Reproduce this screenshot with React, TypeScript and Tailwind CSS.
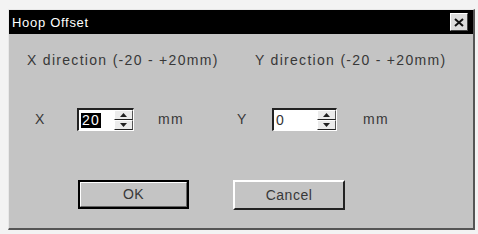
import React from "react";

const font = { fontFamily: '"Liberation Sans", Arial, sans-serif' };

function Spinner() {
  return (
    <div className="flex flex-col w-[19px] h-full">
      <div className="flex-1 flex items-center justify-center bg-[#ececec] border-t border-l border-white border-b border-b-[#222] border-r border-r-[#555]">
        <svg width="7" height="4" viewBox="0 0 7 4"><path d="M3.5 0 L7 4 L0 4 Z" fill="#222" /></svg>
      </div>
      <div className="flex-1 flex items-center justify-center bg-[#ececec] border-t border-l border-white border-b border-b-[#222] border-r border-r-[#555]">
        <svg width="7" height="4" viewBox="0 0 7 4"><path d="M0 0 L7 0 L3.5 4 Z" fill="#222" /></svg>
      </div>
    </div>
  );
}

function NumInput({ value, selected, width }: { value: string; selected?: boolean; width: string }) {
  return (
    <div className={`${width} h-[23px] flex border-t-2 border-l-2 border-t-[#222] border-l-[#222] border-b border-r border-b-white border-r-white bg-white`}>
      <div className="flex-1 flex items-center pl-[2px]">
        <span className={selected ? "bg-black text-white px-[1px] leading-[15px] text-[14px]" : "text-[#333] leading-[15px] text-[14px]"}>{value}</span>
      </div>
      <Spinner />
    </div>
  );
}

export default function App() {
  return (
    <div className="w-[478px] h-[234px] bg-[#f3f3f3] pt-[9px] pl-[8px] overflow-hidden" style={font}>
      <div className="w-[467px] h-[221px] bg-[#c4c4c4] flex flex-col border-t border-l border-t-[#e8e8e8] border-l-[#e8e8e8] border-r-2 border-b-2 border-r-[#555] border-b-[#555]">
        <div className="h-[24px] bg-black flex items-center justify-between pl-[3px] pr-[5px]">
          <span className="text-white text-[13px] tracking-[0.7px] leading-none">Hoop Offset</span>
          <div className="w-[18px] h-[18px] bg-[#dcdcdc] flex items-center justify-center border-t border-l border-white border-r border-b border-r-[#444] border-b-[#444]">
            <svg width="10" height="9" viewBox="0 0 10 9"><path d="M1 1 L9 8 M9 1 L1 8" stroke="#111" strokeWidth="2" /></svg>
          </div>
        </div>
        <div className="flex-1 flex flex-col text-[#383838] text-[14px] tracking-[1.3px]">
          <div className="flex mt-[18px] h-[17px] items-center">
            <span className="ml-[18px] w-[228px]">X direction (-20 - +20mm)</span>
            <span>Y direction (-20 - +20mm)</span>
          </div>
          <div className="flex mt-[39px] items-center">
            <span className="ml-[26px] w-[42px]">X</span>
            <NumInput value="20" selected width="w-[57px]" />
            <span className="ml-[24px] w-[79px]">mm</span>
            <span className="w-[35px]">Y</span>
            <NumInput value="0" width="w-[65px]" />
            <span className="ml-[26px]">mm</span>
          </div>
          <div className="flex mt-[49px]">
            <button className="ml-[69px] w-[111px] h-[29px] bg-[#c4c4c4] border-2 border-black flex items-center justify-center text-[14px] text-[#383838] tracking-[0.5px]">
              <span className="w-full h-full flex items-center justify-center border-t border-l border-white border-r border-b border-r-[#666] border-b-[#666]">OK</span>
            </button>
            <button className="ml-[44px] w-[112px] h-[30px] bg-[#c4c4c4] flex items-center justify-center text-[14px] text-[#383838] tracking-[0.5px] border-t-2 border-l-2 border-t-white border-l-white border-r-2 border-b-2 border-r-[#222] border-b-[#222]">
              Cancel
            </button>
          </div>
        </div>
      </div>
    </div>
  );
}
